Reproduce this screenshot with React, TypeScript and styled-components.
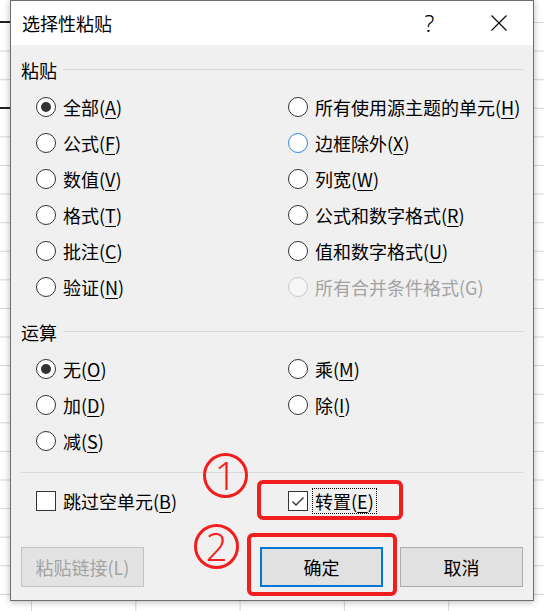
import React from "react";
import styled, { createGlobalStyle, css } from "styled-components";

const GlobalStyle = createGlobalStyle`
  html, body { margin: 0; padding: 0; }
  body { font-family: "Noto Sans CJK SC", "Noto Sans", sans-serif; color: #000; }
  * { box-sizing: border-box; }
`;

const Sheet = styled.div`
  width: 544px;
  height: 611px;
  overflow: hidden;
  padding-left: 10px;
  background-color: #fff;
  background-image:
    linear-gradient(#1f1f1f, #1f1f1f),
    linear-gradient(#1f1f1f, #1f1f1f),
    linear-gradient(to bottom, #d6d6d6 1px, transparent 1px),
    linear-gradient(to right, #d6d6d6 1px, transparent 1px);
  background-size: 10px 2px, 10px 2px, 100% 28.6px, 104.3px 100%;
  background-position: 0 21px, 0 107px, 0 22px, 31px 0;
  background-repeat: no-repeat, no-repeat, repeat, repeat;
`;

const Dialog = styled.div`
  position: relative;
  width: 524px;
  height: 601px;
  border: 1px solid #6e6e6e;
  background: #f0f0f0;
  display: flex;
  flex-direction: column;
  box-shadow: 0 1px 7px rgba(0, 0, 0, 0.28);
`;

const TitleBar = styled.div`
  height: 44px;
  background: #fff;
  display: flex;
  align-items: center;
  padding-left: 11px;
`;

const Title = styled.div`
  flex: 1;
  font-size: 18px;
  line-height: 1;
`;

const CaptionButton = styled.div<{ $size?: number }>`
  width: 69px;
  height: 44px;
  display: flex;
  align-items: center;
  justify-content: center;
  font-size: ${(p) => p.$size ?? 18}px;
  line-height: 1;
  font-family: "Noto Sans", sans-serif;
  font-weight: 300;
`;

const Body = styled.div`
  flex: 1;
  display: flex;
  flex-direction: column;
  padding: 0 10px 13px 10px;
`;

const SectionHeader = styled.div<{ $top: number }>`
  height: 38px;
  margin-top: ${(p) => p.$top}px;
  display: flex;
  align-items: center;
  gap: 6px;
  font-size: 18px;
  line-height: 1;
  &::after {
    content: "";
    flex: 1;
    height: 1px;
    margin-top: -2px;
    background: #d9d9d9;
  }
`;

const OptionGrid = styled.div`
  display: grid;
  grid-template-columns: 252px 1fr;
  grid-auto-rows: 36px;
  padding-left: 15px;
`;

const Option = styled.div<{ $disabled?: boolean }>`
  display: flex;
  align-items: center;
  gap: 7px;
  font-size: 18px;
  line-height: 1;
  white-space: nowrap;
  color: ${(p) => (p.$disabled ? "#a3a3a3" : "#000")};
`;

const Radio = styled.span<{ $checked?: boolean; $focus?: boolean; $disabled?: boolean }>`
  width: 20px;
  height: 20px;
  flex: none;
  border-radius: 50%;
  border: 1px solid #333;
  background: #fff;
  display: grid;
  place-items: center;
  ${(p) => p.$focus && css`border-color: #2f86e0;`}
  ${(p) => p.$disabled && css`border-color: #c9c9c9; background: #f6f6f6;`}
  &::after {
    content: "";
    width: 10px;
    height: 10px;
    border-radius: 50%;
    background: #333;
    display: ${(p) => (p.$checked ? "block" : "none")};
  }
`;

const Key = styled.span<{ $plain?: boolean }>`
  text-decoration: ${(p) => (p.$plain ? "none" : "underline")};
  text-decoration-thickness: 1px;
  text-underline-offset: 3px;
`;

const Separator = styled.div`
  height: 1px;
  margin-top: 13px;
  background: #d9d9d9;
`;

const CheckRow = styled.div`
  display: grid;
  grid-template-columns: 252px 1fr;
  height: 40px;
  margin-top: 8px;
  padding-left: 15px;
`;

const CheckOption = styled.div<{ $gap: number }>`
  display: flex;
  align-items: center;
  gap: ${(p) => p.$gap}px;
  font-size: 18px;
  line-height: 1;
`;

const Box = styled.span`
  width: 20px;
  height: 20px;
  flex: none;
  border: 1px solid #333;
  background: #fff;
  display: grid;
  place-items: center;
`;

const FocusText = styled.span`
  border: 1px dotted #000;
  padding: 3px 2px 3px 2px;
`;

const ButtonRow = styled.div`
  margin-top: auto;
  display: flex;
  justify-content: space-between;
`;

const ButtonGroup = styled.div`
  display: flex;
  gap: 17px;
`;

const Button = styled.div<{ $variant?: "default" | "primary" | "disabled" }>`
  width: 123px;
  height: 40px;
  display: flex;
  align-items: center;
  justify-content: center;
  background: #e1e1e1;
  border: 1px solid #adadad;
  font-size: 18px;
  line-height: 1;
  ${(p) =>
    p.$variant === "primary" &&
    css`
      border: 2px solid #0078d7;
    `}
  ${(p) =>
    p.$variant === "disabled" &&
    css`
      border-color: #c2c2c2;
      color: #a3a3a3;
      background: #e3e3e3;
    `}
`;

const RedFrame = styled.div<{ $l: number; $t: number; $w: number; $h: number }>`
  position: absolute;
  left: ${(p) => p.$l}px;
  top: ${(p) => p.$t}px;
  width: ${(p) => p.$w}px;
  height: ${(p) => p.$h}px;
  border: 4px solid #f21d1d;
  border-radius: 6px;
  pointer-events: none;
`;

const Marker = styled.div<{ $l: number; $t: number }>`
  position: absolute;
  left: ${(p) => p.$l}px;
  top: ${(p) => p.$t}px;
  width: 45px;
  height: 45px;
  border: 3px solid #f21d1d;
  border-radius: 50%;
  display: flex;
  align-items: center;
  justify-content: center;
  color: #f21d1d;
  font-family: "Noto Sans", sans-serif;
  font-weight: 300;
  font-size: 38px;
  line-height: 1;
  padding-bottom: 1px;
`;

type Opt = { t: string; k: string; checked?: boolean; focus?: boolean; disabled?: boolean } | null;

const pasteRows: [Opt, Opt][] = [
  [{ t: "全部", k: "A", checked: true }, { t: "所有使用源主题的单元", k: "H" }],
  [{ t: "公式", k: "F" }, { t: "边框除外", k: "X", focus: true }],
  [{ t: "数值", k: "V" }, { t: "列宽", k: "W" }],
  [{ t: "格式", k: "T" }, { t: "公式和数字格式", k: "R" }],
  [{ t: "批注", k: "C" }, { t: "值和数字格式", k: "U" }],
  [{ t: "验证", k: "N" }, { t: "所有合并条件格式", k: "G", disabled: true }],
];

const opRows: [Opt, Opt][] = [
  [{ t: "无", k: "O", checked: true }, { t: "乘", k: "M" }],
  [{ t: "加", k: "D" }, { t: "除", k: "I" }],
  [{ t: "减", k: "S" }, null],
];

function RadioOption({ o }: { o: Opt }) {
  if (!o) return <div />;
  return (
    <Option $disabled={o.disabled}>
      <Radio $checked={o.checked} $focus={o.focus} $disabled={o.disabled} />
      <span>
        {o.t}(<Key $plain={o.disabled}>{o.k}</Key>)
      </span>
    </Option>
  );
}

const CheckMark = () => (
  <svg width="16" height="16" viewBox="0 0 16 16">
    <polyline points="2.5,8.5 6,12 13.5,4.5" fill="none" stroke="#333" strokeWidth="1.4" />
  </svg>
);

const CloseIcon = () => (
  <svg width="16" height="16" viewBox="0 0 16 16">
    <path d="M0.5 0.5 L15.5 15.5 M15.5 0.5 L0.5 15.5" stroke="#000" strokeWidth="1.1" />
  </svg>
);

export default function App() {
  return (
    <>
      <GlobalStyle />
      <Sheet>
        <Dialog>
          <TitleBar>
            <Title>选择性粘贴</Title>
            <CaptionButton $size={23}>?</CaptionButton>
            <CaptionButton>
              <CloseIcon />
            </CaptionButton>
          </TitleBar>
          <Body>
            <SectionHeader $top={6}>粘贴</SectionHeader>
            <OptionGrid>
              {pasteRows.map((r, i) => (
                <React.Fragment key={i}>
                  <RadioOption o={r[0]} />
                  <RadioOption o={r[1]} />
                </React.Fragment>
              ))}
            </OptionGrid>
            <SectionHeader $top={8}>运算</SectionHeader>
            <OptionGrid>
              {opRows.map((r, i) => (
                <React.Fragment key={i}>
                  <RadioOption o={r[0]} />
                  <RadioOption o={r[1]} />
                </React.Fragment>
              ))}
            </OptionGrid>
            <Separator />
            <CheckRow>
              <CheckOption $gap={7}>
                <Box />
                <span>
                  跳过空单元(<Key>B</Key>)
                </span>
              </CheckOption>
              <CheckOption $gap={4}>
                <Box>
                  <CheckMark />
                </Box>
                <FocusText>
                  转置(<Key>E</Key>)
                </FocusText>
              </CheckOption>
            </CheckRow>
            <ButtonRow>
              <Button $variant="disabled">粘贴链接(L)</Button>
              <ButtonGroup>
                <Button $variant="primary">确定</Button>
                <Button>取消</Button>
              </ButtonGroup>
            </ButtonRow>
          </Body>
          <RedFrame $l={246} $t={479} $w={146} $h={40} />
          <RedFrame $l={236} $t={532} $w={150} $h={63} />
          <Marker $l={192} $t={452}>1</Marker>
          <Marker $l={183} $t={523}>2</Marker>
        </Dialog>
      </Sheet>
    </>
  );
}
